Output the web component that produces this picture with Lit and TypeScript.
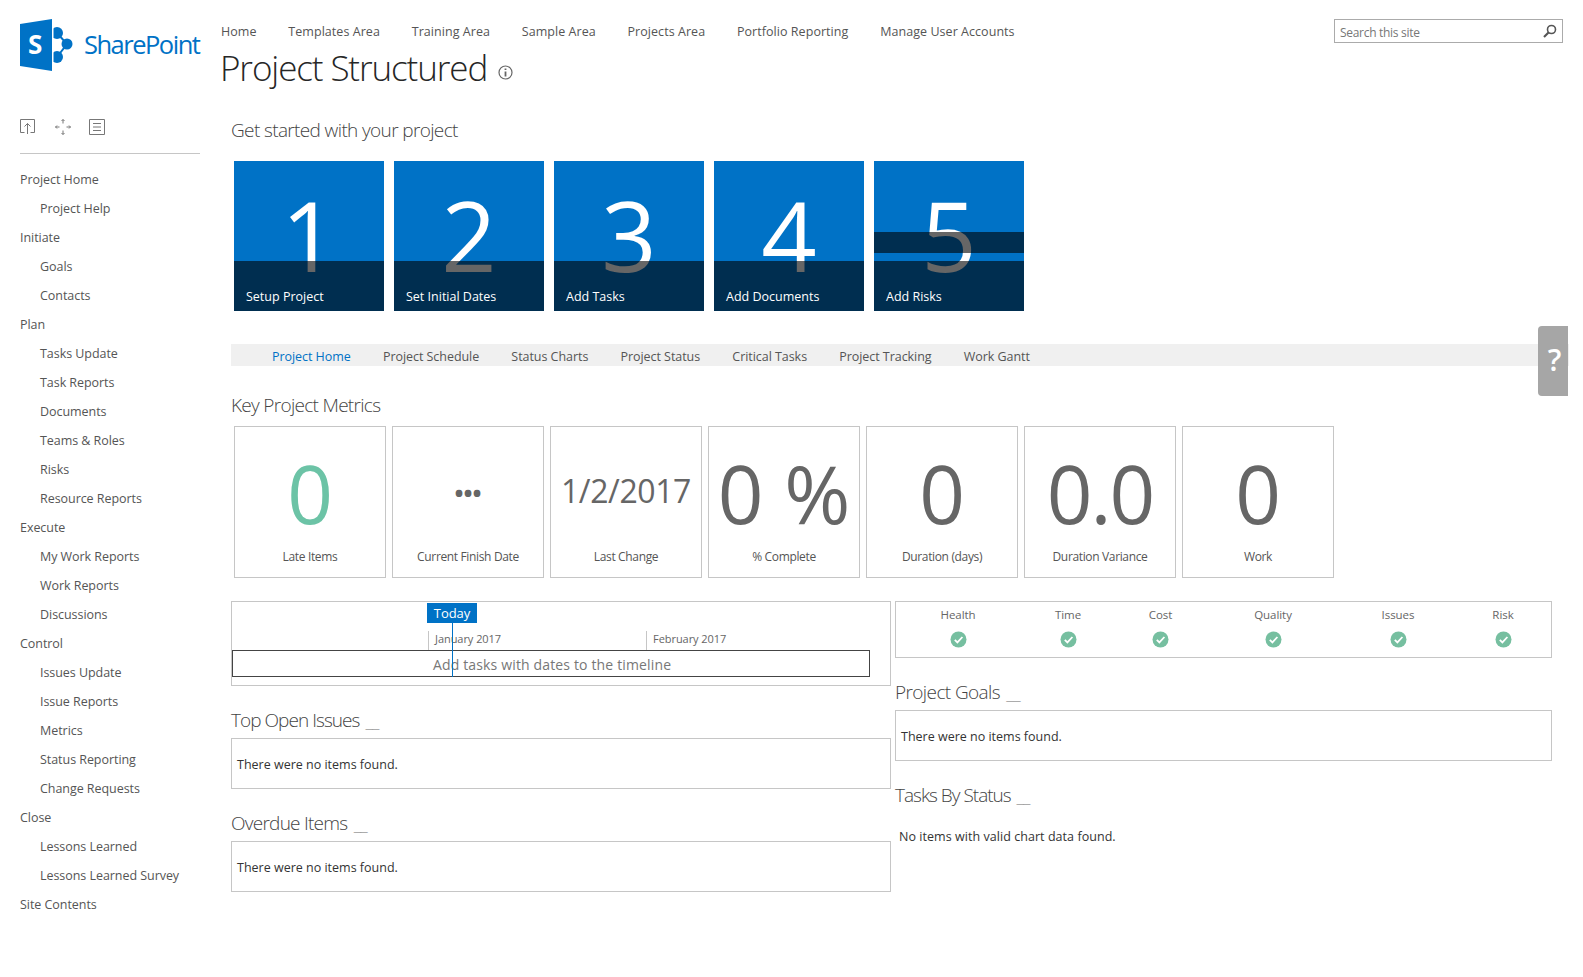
import { LitElement, html, css, svg } from "lit";
import { customElement } from "lit/decorators.js";

const topNav = ["Home", "Templates Area", "Training Area", "Sample Area", "Projects Area", "Portfolio Reporting", "Manage User Accounts"];
const sideNav: [string, number][] = [
  ["Project Home", 0], ["Project Help", 1], ["Initiate", 0], ["Goals", 1], ["Contacts", 1], ["Plan", 0],
  ["Tasks Update", 1], ["Task Reports", 1], ["Documents", 1], ["Teams & Roles", 1], ["Risks", 1], ["Resource Reports", 1],
  ["Execute", 0], ["My Work Reports", 1], ["Work Reports", 1], ["Discussions", 1], ["Control", 0],
  ["Issues Update", 1], ["Issue Reports", 1], ["Metrics", 1], ["Status Reporting", 1], ["Change Requests", 1],
  ["Close", 0], ["Lessons Learned", 1], ["Lessons Learned Survey", 1], ["Site Contents", 0],
];
const tiles = ["Setup Project", "Set Initial Dates", "Add Tasks", "Add Documents", "Add Risks"];
const tabs = ["Project Home", "Project Schedule", "Status Charts", "Project Status", "Critical Tasks", "Project Tracking", "Work Gantt"];
const metrics = [
  { value: "0", label: "Late Items", cls: "green" },
  { value: "•••", label: "Current Finish Date", cls: "dots" },
  { value: "1/2/2017", label: "Last Change", cls: "date" },
  { value: "0 %", label: "% Complete", cls: "" },
  { value: "0", label: "Duration (days)", cls: "" },
  { value: "0.0", label: "Duration Variance", cls: "tight" },
  { value: "0", label: "Work", cls: "" },
];
const health = ["Health", "Time", "Cost", "Quality", "Issues", "Risk"];

const check = svg`<circle cx="8.5" cy="8.5" r="8" fill="#76bfa0"/><path d="M4.8 8.8l2.6 2.6 5-5.4" fill="none" stroke="#fff" stroke-width="1.8"/>`;

@customElement("app-root")
export class AppRoot extends LitElement {
  static styles = css`
    :host {
      display: block;
      position: relative;
      width: 1583px;
      height: 977px;
      overflow: hidden;
      background: #fff;
      color: #555;
      font-family: "Open Sans", "Noto Sans", sans-serif;
      font-size: 12.5px;
      letter-spacing: -0.05px;
    }
    .page {
      display: grid;
      grid-template-columns: 221px 1fr;
    }
    .side {
      padding: 19px 0 0 20px;
      width: 180px;
    }
    .logo {
      display: flex;
      height: 52px;
      align-items: center;
    }
    .logo svg { flex: none; }
    .logo-name {
      color: #0072c6;
      font-size: 25.5px;
      font-weight: 400;
      letter-spacing: -1.5px;
      margin-left: 10px;
      padding-bottom: 2px;
      white-space: nowrap;
    }
    .tools {
      display: flex;
      gap: 18.5px;
      margin-top: 48px;
      height: 16px;
    }
    .tools svg { display: block; }
    .side hr {
      border: 0;
      border-top: 1px solid #c6c6c6;
      margin: 18px 0 11px;
    }
    .side-item {
      height: 29px;
      line-height: 29px;
      white-space: nowrap;
    }
    .side-item.sub { padding-left: 20px; }

    .top {
      display: flex;
      gap: 31.8px;
      padding-top: 21px;
      line-height: 21px;
      height: 21px;
      letter-spacing: 0.05px;
    }
    .title {
      display: flex;
      align-items: center;
      height: 50px;
      margin-left: -1px;
      font-size: 35px;
      font-weight: 300;
      letter-spacing: -1.1px;
      color: #262626;
    }
    .title svg { margin: 11px 0 0 11px; }
    .content { padding-left: 10px; }
    h2 {
      margin: 0;
      font-size: 19px;
      font-weight: 300;
      letter-spacing: -0.7px;
      line-height: 24px;
      color: #444;
      white-space: nowrap;
    }
    h2 span { color: #999; font-size: 18px; margin-left: 2px; }
    .started { margin-top: 26px; letter-spacing: -0.63px; }
    .tiles {
      display: flex;
      gap: 10px;
      margin: 19px 0 0 3px;
    }
    .tile {
      position: relative;
      width: 150px;
      height: 150px;
      background: #0072c6;
      overflow: hidden;
    }
    .tile-bar {
      position: absolute;
      left: 0;
      right: 0;
      bottom: 0;
      height: 50px;
      background: #002e50;
    }
    .tile-band {
      position: absolute;
      left: 0;
      right: 0;
      top: 71px;
      height: 21px;
      background: #002e50;
    }
    .tile-num {
      position: absolute;
      left: 0;
      right: 0;
      top: 0;
      height: 122px;
      text-align: center;
      font-size: 97px;
      font-weight: 400;
      line-height: 147px;
      letter-spacing: 0;
      color: transparent;
      background: linear-gradient(#fff 100px, #666 100px);
      -webkit-background-clip: text;
      background-clip: text;
    }
    .tile-num.banded {
      background: linear-gradient(#fff 71px, #666 71px 92px, #fff 92px 100px, #666 100px);
      -webkit-background-clip: text;
      background-clip: text;
    }
    .tile-label {
      position: absolute;
      left: 12px;
      bottom: 4px;
      color: #fff;
      line-height: 20px;
      letter-spacing: 0;
    }
    .tabs {
      display: flex;
      gap: 32.2px;
      height: 22px;
      line-height: 26px;
      margin: 33px 14px 0 0;
      padding-left: 41px;
      background: #f0f0f0;
      letter-spacing: -0.05px;
    }
    .tabs .on { color: #0072c6; }
    .key { margin-top: 27px; }
    .cards {
      display: flex;
      gap: 6px;
      margin: 9px 0 0 3px;
    }
    .card {
      box-sizing: border-box;
      width: 152px;
      height: 152px;
      border: 1px solid #c6c6c6;
      display: flex;
      flex-direction: column;
      align-items: center;
    }
    .card-value {
      height: 120px;
      line-height: 131px;
      font-size: 80px;
      font-weight: 400;
      letter-spacing: 0;
      color: #666;
      white-space: nowrap;
    }
    .card-value.green { color: #6cc3a6; }
    .card-value.date { font-size: 32px; line-height: 127px; letter-spacing: -0.4px; }
    .card-value.dots { font-size: 24px; font-weight: 700; letter-spacing: 0; }
    .card-value.tight { letter-spacing: -2px; }
    .card-label { font-size: 12px; line-height: 20px; letter-spacing: -0.35px; }
    .cols {
      display: grid;
      grid-template-columns: 660px 657px;
      gap: 4px;
      margin-top: 23px;
    }
    .timeline {
      position: relative;
      box-sizing: border-box;
      height: 85px;
      border: 1px solid #c6c6c6;
    }
    .today {
      position: absolute;
      left: 195px;
      top: 1px;
      width: 50px;
      height: 20px;
      line-height: 20px;
      text-align: center;
      background: #0072c6;
      color: #fff;
      font-size: 13px;
    }
    .today-line {
      position: absolute;
      left: 220px;
      top: 21px;
      height: 54px;
      border-left: 1px solid #0072c6;
      z-index: 1;
    }
    .month {
      position: absolute;
      top: 29px;
      padding-left: 6px;
      height: 19px;
      line-height: 16px;
      border-left: 1px solid #c6c6c6;
      font-size: 11px;
      color: #666;
    }
    .track {
      position: absolute;
      left: 0;
      top: 48px;
      box-sizing: border-box;
      width: 638px;
      height: 27px;
      line-height: 27px;
      border: 1px solid #444;
      background: #fff;
      padding-left: 200px;
      font-size: 14px;
      letter-spacing: 0.15px;
      color: #777;
    }
    .section-head { margin-top: 22px; letter-spacing: -0.95px; }
    .section-head.overdue { letter-spacing: -0.75px; }
    .empty {
      box-sizing: border-box;
      height: 51px;
      line-height: 51px;
      margin-top: 6px;
      padding-left: 5px;
      border: 1px solid #c6c6c6;
      color: #333;
      letter-spacing: 0;
    }
    .status {
      box-sizing: border-box;
      display: grid;
      grid-template-columns: 124px 96px 89px 136px 114px 96px;
      height: 57px;
      border: 1px solid #c6c6c6;
      text-align: center;
      font-size: 11.5px;
      color: #666;
    }
    .status div { padding-top: 4px; line-height: 18px; }
    .status svg { display: block; margin: 7px auto 0; }
    .goals { margin-top: 22px; letter-spacing: -0.6px; }
    .status-head { margin-top: 22px; letter-spacing: -1px; }
    .no-data { margin: 20px 0 0 4px; line-height: 20px; color: #333; letter-spacing: 0.05px; }

    .search {
      position: absolute;
      left: 1334px;
      top: 19px;
      box-sizing: border-box;
      width: 229px;
      height: 24px;
      border: 1px solid #ababab;
      padding-left: 5px;
      line-height: 25px;
      font-size: 12px;
      letter-spacing: -0.3px;
      color: #777;
    }
    .search svg { position: absolute; right: 5px; top: 4px; }
    .help {
      position: absolute;
      left: 1538px;
      top: 326px;
      box-sizing: border-box;
      width: 30px;
      height: 70px;
      padding-left: 3px;
      background: #a6a6a6;
      border-radius: 4px 0 0 4px;
      color: #fff;
      font-size: 30px;
      font-weight: 600;
      line-height: 68px;
      text-align: center;
    }
  `;

  renderLogo() {
    return html`<svg width="54" height="52" viewBox="0 0 54 52">
      <path d="M37 14L47 25L37 38" fill="none" stroke="#0072c6" stroke-width="2"/>
      <circle cx="37" cy="14" r="6" fill="#0072c6"/>
      <circle cx="47" cy="25" r="5.5" fill="#0072c6"/>
      <circle cx="37" cy="38" r="6" fill="#0072c6"/>
      <rect x="32" y="0" width="1.5" height="52" fill="#fff"/>
      <path d="M0 5L32 0V52L0 47Z" fill="#0072c6"/>
      <text x="8" y="35" fill="#fff" font-size="26" font-weight="700" font-family="Open Sans">S</text>
    </svg>`;
  }

  renderTools() {
    return html`
      <svg width="16" height="16" viewBox="0 0 16 16" fill="none" stroke="#777">
        <path d="M4.5 13.5H.5V.5H14.5V13.5H10.5M7.5 15V4.5M4.5 7.5L7.5 4.5 10.5 7.5"/>
      </svg>
      <svg width="16" height="16" viewBox="0 0 16 16" fill="none" stroke="#777">
        <path d="M8 0.5V4.5M8 11.5V15.5M0.5 8H4.5M11.5 8H15.5M6.5 2L8 .5 9.5 2M6.5 14L8 15.5 9.5 14M2 6.5L.5 8 2 9.5M14 6.5L15.5 8 14 9.5"/>
      </svg>
      <svg width="16" height="16" viewBox="0 0 16 16" fill="none" stroke="#777">
        <path d="M.5.5H15.5V15.5H.5ZM4 4.5H12M4 8H12M4 11.5H12"/>
      </svg>`;
  }

  renderSection(title: string, cls = "section-head") {
    return html`<h2 class=${cls}>${title} <span>__</span></h2>`;
  }

  render() {
    return html`
      <div class="page">
        <aside class="side">
          <div class="logo">${this.renderLogo()}<span class="logo-name">SharePoint</span></div>
          <div class="tools">${this.renderTools()}</div>
          <hr />
          ${sideNav.map(([t, lvl]) => html`<div class="side-item ${lvl ? "sub" : ""}">${t}</div>`)}
        </aside>
        <main>
          <nav class="top">${topNav.map((t) => html`<span>${t}</span>`)}</nav>
          <div class="title">
            Project Structured
            <svg width="15" height="15" viewBox="0 0 15 15" fill="none" stroke="#666">
              <circle cx="7.5" cy="7.5" r="6.5" stroke-width="1.2"/>
              <path d="M7.5 6.5V11.5" stroke-width="1.8"/>
              <path d="M7.5 3.5V5" stroke-width="1.8"/>
            </svg>
          </div>
          <div class="content">
            <h2 class="started">Get started with your project</h2>
            <div class="tiles">
              ${tiles.map((t, i) => html`
                <div class="tile">
                  <div class="tile-bar"></div>
                  ${i === 4 ? html`<div class="tile-band"></div>` : ""}
                  <div class="tile-num ${i === 4 ? "banded" : ""}">${i + 1}</div>
                  <div class="tile-label">${t}</div>
                </div>`)}
            </div>
            <div class="tabs">
              ${tabs.map((t, i) => html`<span class=${i === 0 ? "on" : ""}>${t}</span>`)}
            </div>
            <h2 class="key">Key Project Metrics</h2>
            <div class="cards">
              ${metrics.map((m) => html`
                <div class="card">
                  <div class="card-value ${m.cls}">${m.value}</div>
                  <div class="card-label">${m.label}</div>
                </div>`)}
            </div>
            <div class="cols">
              <div>
                <div class="timeline">
                  <div class="month" style="left:196px">January 2017</div>
                  <div class="month" style="left:414px">February 2017</div>
                  <div class="track">Add tasks with dates to the timeline</div>
                  <div class="today">Today</div>
                  <div class="today-line"></div>
                </div>
                ${this.renderSection("Top Open Issues")}
                <div class="empty">There were no items found.</div>
                ${this.renderSection("Overdue Items", "section-head overdue")}
                <div class="empty">There were no items found.</div>
              </div>
              <div class="right">
                <div class="status">
                  ${health.map((h) => html`<div>${h}<svg width="17" height="17" viewBox="0 0 17 17">${check}</svg></div>`)}
                </div>
                ${this.renderSection("Project Goals", "goals")}
                <div class="empty">There were no items found.</div>
                ${this.renderSection("Tasks By Status", "status-head")}
                <div class="no-data">No items with valid chart data found.</div>
              </div>
            </div>
          </div>
        </main>
      </div>
      <div class="search">
        Search this site
        <svg width="14" height="14" viewBox="0 0 14 14" fill="none" stroke="#555">
          <circle cx="8.5" cy="5.5" r="4" stroke-width="1.6"/>
          <path d="M5.5 8.5L1 13" stroke-width="2.2"/>
        </svg>
      </div>
      <div class="help">?</div>
    `;
  }
}
